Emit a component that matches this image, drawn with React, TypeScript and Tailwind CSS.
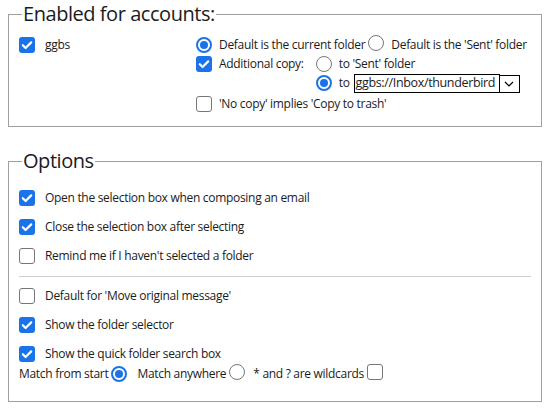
import React from 'react'

const font = { fontFamily: "'Open Sans', 'Noto Sans', sans-serif" }

const Check = ({ on }: { on?: boolean }) =>
    on ? (
        <span className="inline-flex h-4 w-4 shrink-0 items-center justify-center rounded-[3px] bg-[#1a73e8]">
            <svg viewBox="0 0 16 16" className="h-4 w-4" fill="none" stroke="#fff" strokeWidth="2.2" strokeLinecap="round" strokeLinejoin="round">
                <path d="M3.8 8.2l2.8 2.8L12.2 5.4" />
            </svg>
        </span>
    ) : (
        <span className="inline-block h-4 w-4 shrink-0 rounded-[3px] border border-[#767676] bg-white" />
    )

const Radio = ({ on }: { on?: boolean }) =>
    on ? (
        <span className="inline-flex h-4 w-4 shrink-0 items-center justify-center rounded-full border-2 border-[#1a73e8] bg-white">
            <span className="h-2 w-2 rounded-full bg-[#1a73e8]" />
        </span>
    ) : (
        <span className="inline-block h-4 w-4 shrink-0 rounded-full border border-[#767676] bg-white" />
    )

const Row = ({ on, label, gap = 'gap-[10px]' }: { on?: boolean; label: string; gap?: string }) => (
    <div className={`flex h-4 items-center ${gap}`}>
        <Check on={on} />
        <span>{label}</span>
    </div>
)

export default function App() {
    return (
        <div className="w-[550px] h-[415px] bg-white pt-[1px] text-[12px] leading-4 tracking-[-0.3px] text-[#1b1b1b] whitespace-nowrap" style={font}>
            <fieldset className="ml-2 w-[534px] border border-[#a0a0a0] pl-[10px] pr-2 pb-[14px]">
                <legend className="ml-[3px] px-px text-[20px] leading-[26px] tracking-[-0.45px] text-[#1b1b1b]">Enabled for accounts:</legend>
                <div className="flex pt-[10px]">
                    <div className="w-[177px]">
                        <Row on label="ggbs" />
                    </div>
                    <div className="flex flex-col gap-[3px]">
                        <div className="flex h-4 items-center">
                            <Radio on />
                            <span className="ml-[7px]">Default is the current folder</span>
                            <span className="ml-[3px]"><Radio /></span>
                            <span className="ml-[7px]">Default is the 'Sent' folder</span>
                        </div>
                        <div className="flex">
                            <div className="flex h-4 items-center gap-[7px]">
                                <Check on />
                                <span>Additional copy:</span>
                            </div>
                            <div className="ml-3 flex flex-col gap-[3px]">
                                <div className="flex h-4 items-center gap-[7px]">
                                    <Radio />
                                    <span>to 'Sent' folder</span>
                                </div>
                                <div className="flex h-4 items-center">
                                    <Radio on />
                                    <span className="ml-[7px]">to</span>
                                    <span className="ml-[4px] flex h-[19px] w-[146px] shrink-0 items-center overflow-hidden border border-black px-[1px] text-[12.5px] tracking-[-0.35px]">ggbs://Inbox/thunderbird</span>
                                    <span className="flex h-[18px] w-[20px] shrink-0 items-center justify-center self-start border border-l-0 border-black">
                                        <svg viewBox="0 0 12 12" className="h-3 w-3" fill="none" stroke="#000" strokeWidth="1.2">
                                            <path d="M2 4l4 4 4-4" />
                                        </svg>
                                    </span>
                                </div>
                            </div>
                        </div>
                        <div className="mt-[2px]">
                            <Row label="'No copy' implies 'Copy to trash'" gap="gap-[7px]" />
                        </div>
                    </div>
                </div>
            </fieldset>

            <fieldset className="ml-2 mt-[21px] w-[534px] border border-[#a0a0a0] pl-[10px] pr-[10px] pb-[19px]">
                <legend className="ml-[3px] px-px text-[20px] leading-[26px] tracking-[-0.45px] text-[#1b1b1b]">Options</legend>
                <div className="flex flex-col pt-4">
                    <Row on label="Open the selection box when composing an email" />
                    <div className="h-[13px]" />
                    <Row on label="Close the selection box after selecting" />
                    <div className="h-[13px]" />
                    <Row label="Remind me if I haven't selected a folder" />
                    <div className="mt-3 mb-[11px] h-px bg-[#cfcfcf]" />
                    <Row label="Default for 'Move original message'" />
                    <div className="h-[13px]" />
                    <Row on label="Show the folder selector" />
                    <div className="h-[13px]" />
                    <Row on label="Show the quick folder search box" />
                    <div className="mt-[4px] flex h-4 items-center">
                        <span>Match from start</span>
                        <span className="ml-[3px]"><Radio on /></span>
                        <span className="ml-[10px]">Match anywhere</span>
                        <span className="ml-[3px]"><Radio /></span>
                        <span className="ml-[8px]">* and ? are wildcards</span>
                        <span className="ml-[3px]"><Check /></span>
                    </div>
                </div>
            </fieldset>
        </div>
    )
}
